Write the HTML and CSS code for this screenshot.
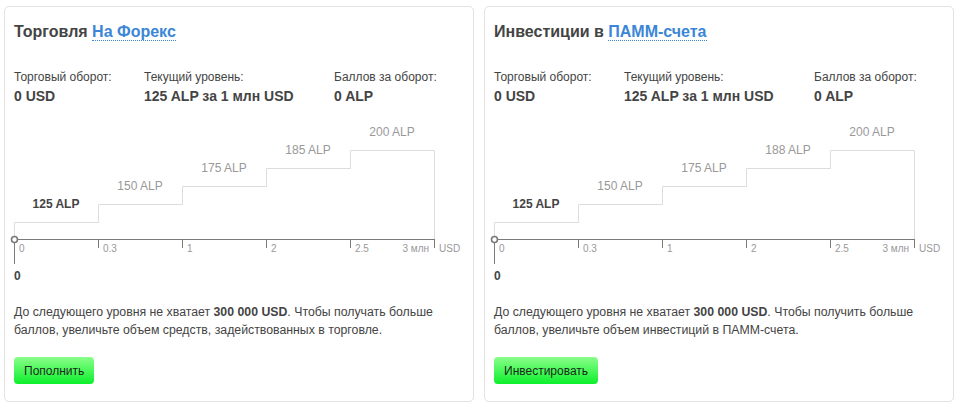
FILE: index.html
```html
<!DOCTYPE html>
<html lang="ru">
<head>
<meta charset="utf-8">
<title>Баллы</title>
<link rel="stylesheet" href="styles.css">
</head>
<body>
<div class="wrap">
  <section class="card">
    <h2 class="title">Торговля <a class="link" href="#">На Форекс</a></h2>
    <div class="stats">
      <div class="stat"><div class="stat-label">Торговый оборот:</div><div class="stat-value">0 USD</div></div>
      <div class="stat"><div class="stat-label">Текущий уровень:</div><div class="stat-value">125 ALP за 1 млн USD</div></div>
      <div class="stat"><div class="stat-label">Баллов за оборот:</div><div class="stat-value">0 ALP</div></div>
    </div>
    <svg class="chart" width="450" height="170" viewBox="0 0 450 170">
      <path class="steps" d="M0.5,124 V107.5 H84.5 V89.5 H168.5 V71.5 H252.5 V53.5 H336.5 V35.5 H420.5 V124"/>
      <path class="axis" d="M0,124.5 H421 M84.5,124 V133 M168.5,124 V133 M252.5,124 V133 M336.5,124 V133 M420.5,124 V133 M0.5,127 V149"/>
      <circle class="dot" cx="0.5" cy="124.5" r="3"/>
      <text class="lvl cur" x="42" y="93" text-anchor="middle">125 ALP</text>
      <text class="lvl" x="126" y="75" text-anchor="middle">150 ALP</text>
      <text class="lvl" x="210" y="57" text-anchor="middle">175 ALP</text>
      <text class="lvl" x="294" y="39" text-anchor="middle">185 ALP</text>
      <text class="lvl" x="378" y="21" text-anchor="middle">200 ALP</text>
      <text class="tick" x="5" y="137">0</text>
      <text class="tick" x="89" y="137">0.3</text>
      <text class="tick" x="173" y="137">1</text>
      <text class="tick" x="257" y="137">2</text>
      <text class="tick" x="341" y="137">2.5</text>
      <text class="tick" x="415" y="137" text-anchor="end">3 млн</text>
      <text class="tick" x="425" y="137">USD</text>
      <text class="zero" x="0" y="165">0</text>
    </svg>
    <p class="note">До следующего уровня не хватает <b>300 000 USD</b>. Чтобы получать больше баллов, увеличьте объем средств, задействованных в торговле.</p>
    <button class="btn" type="button">Пополнить</button>
  </section>

  <section class="card">
    <h2 class="title">Инвестиции в <a class="link" href="#">ПАММ-счета</a></h2>
    <div class="stats">
      <div class="stat"><div class="stat-label">Торговый оборот:</div><div class="stat-value">0 USD</div></div>
      <div class="stat"><div class="stat-label">Текущий уровень:</div><div class="stat-value">125 ALP за 1 млн USD</div></div>
      <div class="stat"><div class="stat-label">Баллов за оборот:</div><div class="stat-value">0 ALP</div></div>
    </div>
    <svg class="chart" width="450" height="170" viewBox="0 0 450 170">
      <path class="steps" d="M0.5,124 V107.5 H84.5 V89.5 H168.5 V71.5 H252.5 V53.5 H336.5 V35.5 H420.5 V124"/>
      <path class="axis" d="M0,124.5 H421 M84.5,124 V133 M168.5,124 V133 M252.5,124 V133 M336.5,124 V133 M420.5,124 V133 M0.5,127 V149"/>
      <circle class="dot" cx="0.5" cy="124.5" r="3"/>
      <text class="lvl cur" x="42" y="93" text-anchor="middle">125 ALP</text>
      <text class="lvl" x="126" y="75" text-anchor="middle">150 ALP</text>
      <text class="lvl" x="210" y="57" text-anchor="middle">175 ALP</text>
      <text class="lvl" x="294" y="39" text-anchor="middle">188 ALP</text>
      <text class="lvl" x="378" y="21" text-anchor="middle">200 ALP</text>
      <text class="tick" x="5" y="137">0</text>
      <text class="tick" x="89" y="137">0.3</text>
      <text class="tick" x="173" y="137">1</text>
      <text class="tick" x="257" y="137">2</text>
      <text class="tick" x="341" y="137">2.5</text>
      <text class="tick" x="415" y="137" text-anchor="end">3 млн</text>
      <text class="tick" x="425" y="137">USD</text>
      <text class="zero" x="0" y="165">0</text>
    </svg>
    <p class="note">До следующего уровня не хватает <b>300 000 USD</b>. Чтобы получить больше баллов, увеличьте объем инвестиций в ПАММ-счета.</p>
    <button class="btn" type="button">Инвестировать</button>
  </section>
</div>
</body>
</html>
```
FILE: styles.css
```css
* { box-sizing: border-box; }
html, body { margin: 0; padding: 0; background: #fff; }
body {
  font-family: "Liberation Sans", Arial, sans-serif;
  color: #444;
  font-size: 12px;
}
.wrap {
  display: flex;
  gap: 10px;
  padding: 6px 4px;
}
.card {
  width: 470px;
  height: 396px;
  border: 1px solid #e2e2e2;
  border-radius: 5px;
  padding: 15px 9px 0 9px;
  background: #fff;
}
.title {
  margin: 0;
  font-size: 16px;
  line-height: 20px;
  font-weight: bold;
  color: #444;
}
.link {
  color: #3b86d6;
  text-decoration: none;
  border-bottom: 1px dotted #3b86d6;
}
.stats {
  display: grid;
  grid-template-columns: 130px 190px 1fr;
  margin-top: 26px;
}
.stat-label {
  font-size: 12px;
  line-height: 18px;
  color: #444;
}
.stat-value {
  font-size: 14px;
  line-height: 20px;
  font-weight: bold;
  color: #444;
}
.chart {
  display: block;
  margin-top: 9px;
  overflow: visible;
}
.steps { fill: none; stroke: #dcdcdc; stroke-width: 1; }
.axis { fill: none; stroke: #7a7a7a; stroke-width: 1; }
.dot { fill: #fff; stroke: #777; stroke-width: 1.6; }
.lvl {
  font-family: "Liberation Sans", Arial, sans-serif;
  font-size: 12px;
  fill: #999;
}
.lvl.cur { fill: #444; font-weight: bold; }
.tick {
  font-family: "Liberation Sans", Arial, sans-serif;
  font-size: 10px;
  fill: #999;
}
.zero {
  font-family: "Liberation Sans", Arial, sans-serif;
  font-size: 12px;
  font-weight: bold;
  fill: #444;
}
.note {
  margin: 18px 0 0 0;
  max-width: 432px;
  font-size: 12.3px;
  line-height: 18px;
  color: #444;
}
.btn {
  display: block;
  margin-top: 18px;
  height: 27px;
  padding: 0 10px;
  border: 0;
  border-radius: 4px;
  background: linear-gradient(to bottom, #8aff8a, #0cef2c);
  font-family: "Liberation Sans", Arial, sans-serif;
  font-size: 12px;
  color: #1a2a1a;
  cursor: pointer;
}
```
